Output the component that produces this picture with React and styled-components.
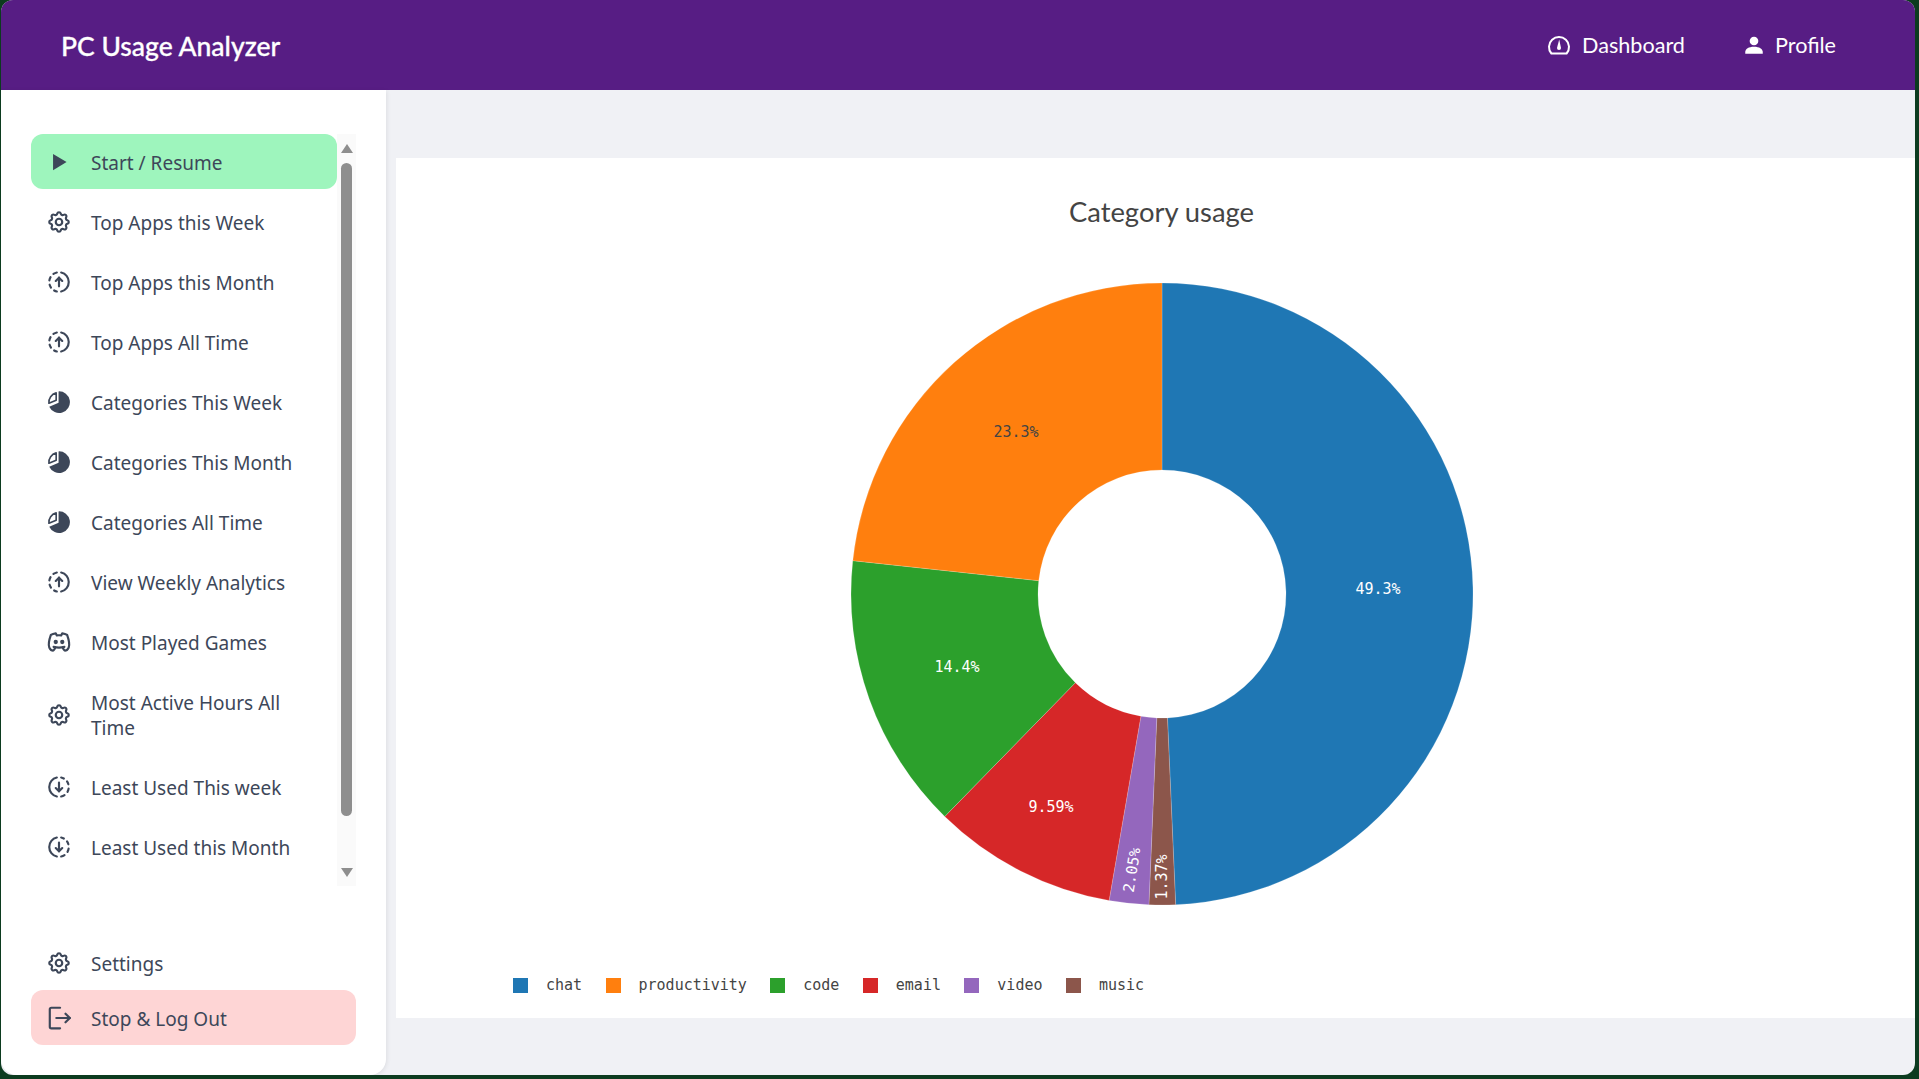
import styled, { createGlobalStyle } from "styled-components";
import { TbSettings, TbBrandDiscord } from "react-icons/tb";

const GlobalStyle = createGlobalStyle`
    html, body {
        margin: 0;
        height: 100%;
        overflow: hidden;
        background: #0c3b1f;
    }
    * {
        box-sizing: border-box;
    }
`;

// tabler style progress circles, drawn here so both directions share one shape
const ProgressUp = () => (
    <svg viewBox="0 0 24 24" width="24" height="24" fill="none" stroke="currentColor" strokeWidth="2" strokeLinecap="round" strokeLinejoin="round">
        <path d="M10 20.777a8.942 8.942 0 0 1 -2.48 -.969" />
        <path d="M14 3.223a9.003 9.003 0 0 1 0 17.554" />
        <path d="M4.579 17.093a8.961 8.961 0 0 1 -1.227 -2.592" />
        <path d="M3.124 10.5c.16 -.95 .468 -1.85 .9 -2.675l.169 -.305" />
        <path d="M6.907 4.579a8.954 8.954 0 0 1 3.093 -1.356" />
        <path d="M12 16v-8" />
        <path d="M9 11l3 -3l3 3" />
    </svg>
);

const ProgressDown = () => (
    <svg viewBox="0 0 24 24" width="24" height="24" fill="none" stroke="currentColor" strokeWidth="2" strokeLinecap="round" strokeLinejoin="round">
        <path d="M14 3.223a8.942 8.942 0 0 1 2.48 .969" />
        <path d="M10 20.777a9.003 9.003 0 0 1 0 -17.554" />
        <path d="M19.421 6.907a8.961 8.961 0 0 1 1.227 2.592" />
        <path d="M20.876 13.5c-.16 .95 -.468 1.85 -.9 2.675l-.169 .305" />
        <path d="M17.093 19.421a8.954 8.954 0 0 1 -3.093 1.356" />
        <path d="M12 8v8" />
        <path d="M9 13l3 3l3 -3" />
    </svg>
);

const PieIcon = () => (
    <svg viewBox="0 0 24 24" width="24" height="24">
        <path fill="currentColor" d="M11.6 2.2A10 10 0 1 1 3 16.4L11.6 12.6Z" />
        <path fill="none" stroke="currentColor" strokeWidth="1.5" strokeLinejoin="round" d="M9.4 3.6A9 9 0 0 0 2.7 13.2L9.4 10.3Z" />
    </svg>
);

const PlayIcon = () => (
    <svg viewBox="0 0 24 24" width="24" height="24">
        <path fill="currentColor" d="M6.5 4.5L19 12L6.5 19.5Z" />
    </svg>
);

const LogoutIcon = () => (
    <svg viewBox="0 0 24 24" width="24" height="24" fill="none" stroke="currentColor" strokeWidth="2" strokeLinecap="round" strokeLinejoin="round">
        <path d="M13 2.5H5a1.5 1.5 0 0 0 -1.5 1.5v16a1.5 1.5 0 0 0 1.5 1.5h8" />
        <path d="M9.5 12H22" />
        <path d="M18 8l4 4l-4 4" />
    </svg>
);

const GaugeIcon = () => (
    <svg viewBox="0 0 24 24" width="24" height="24" fill="none" stroke="currentColor" strokeWidth="2" strokeLinejoin="round">
        <path d="M4.4 20.5a10 10 0 1 1 15.2 0Z" />
        <path fill="currentColor" stroke="none" d="M12.2 6.5L14 15a2 2 0 0 1 -4 0Z" />
    </svg>
);

const UserIcon = () => (
    <svg viewBox="0 0 24 24" width="20" height="20">
        <circle cx="12" cy="7.2" r="5.2" fill="currentColor" />
        <path fill="currentColor" d="M1.5 22.5v-2c0-4 4-6.5 10.5-6.5s10.5 2.5 10.5 6.5v2Z" />
    </svg>
);

const menuItems = [
    { label: "Start / Resume", icon: <PlayIcon />, active: true },
    { label: "Top Apps this Week", icon: <TbSettings /> },
    { label: "Top Apps this Month", icon: <ProgressUp /> },
    { label: "Top Apps All Time", icon: <ProgressUp /> },
    { label: "Categories This Week", icon: <PieIcon /> },
    { label: "Categories This Month", icon: <PieIcon /> },
    { label: "Categories All Time", icon: <PieIcon /> },
    { label: "View Weekly Analytics", icon: <ProgressUp /> },
    { label: "Most Played Games", icon: <TbBrandDiscord /> },
    { label: "Most Active Hours All Time", icon: <TbSettings /> },
    { label: "Least Used This week", icon: <ProgressDown /> },
    { label: "Least Used this Month", icon: <ProgressDown /> },
];

// clockwise from twelve o'clock, same order as the reference chart
const slices = [
    { name: "chat", pct: 49.3, color: "#1f77b4" },
    { name: "music", pct: 1.37, color: "#8c564b" },
    { name: "video", pct: 2.05, color: "#9467bd" },
    { name: "email", pct: 9.59, color: "#d62728" },
    { name: "code", pct: 14.4, color: "#2ca02c" },
    { name: "productivity", pct: 23.29, color: "#ff7f0e" },
];

const legendOrder = ["chat", "productivity", "code", "email", "video", "music"];

const pieLabels = [
    { text: "49.3%", x: 216, y: -5, fill: "#fff" },
    { text: "23.3%", x: -146, y: -162, fill: "#444" },
    { text: "14.4%", x: -205, y: 73, fill: "#fff" },
    { text: "9.59%", x: -111, y: 213, fill: "#fff" },
    { text: "2.05%", x: -30, y: 276, fill: "#fff", rotate: -81 },
    { text: "1.37%", x: 0, y: 283, fill: "#fff", rotate: -90 },
];

const OUTER = 311;
const INNER = 124;

const point = (radius, deg) => {
    const rad = (deg * Math.PI) / 180;
    return `${(radius * Math.sin(rad)).toFixed(2)} ${(-radius * Math.cos(rad)).toFixed(2)}`;
};

const slicePath = (start, end) => {
    const large = end - start > 180 ? 1 : 0;
    return `M${point(OUTER, start)}A${OUTER} ${OUTER} 0 ${large} 1 ${point(OUTER, end)}L${point(INNER, end)}A${INNER} ${INNER} 0 ${large} 0 ${point(INNER, start)}Z`;
};

const Donut = () => {
    let angle = 0;
    const total = slices.reduce((sum, s) => sum + s.pct, 0);
    return (
        <PieSvg viewBox="-320 -320 640 640">
            {slices.map((s) => {
                const start = angle;
                angle += (s.pct / total) * 360;
                return <path key={s.name} d={slicePath(start, angle)} fill={s.color} stroke="#fff" strokeOpacity="0.3" strokeWidth="0.6" />;
            })}
            {pieLabels.map((l) => (
                <PieLabel
                    key={l.text}
                    fill={l.fill}
                    textAnchor="middle"
                    dominantBaseline="central"
                    transform={`translate(${l.x} ${l.y}) rotate(${l.rotate || 0})`}
                >
                    {l.text}
                </PieLabel>
            ))}
        </PieSvg>
    );
};

const App = () => {
    return (
        <Page>
            <GlobalStyle />
            <Window>
                <Header>
                    <Brand>PC Usage Analyzer</Brand>
                    <TopNav>
                        <TopLink>
                            <GaugeIcon />
                            Dashboard
                        </TopLink>
                        <TopLink>
                            <UserIcon />
                            Profile
                        </TopLink>
                    </TopNav>
                </Header>
                <Body>
                    <Sidebar>
                        <ScrollArea>
                            <MenuList>
                                {menuItems.map((item) => (
                                    <MenuItem key={item.label} $bg={item.active ? "#9ef5bd" : "transparent"}>
                                        <MenuIcon>{item.icon}</MenuIcon>
                                        <span>{item.label}</span>
                                    </MenuItem>
                                ))}
                            </MenuList>
                            <ScrollRail>
                                <ArrowUp />
                                <Thumb />
                                <ArrowDown />
                            </ScrollRail>
                        </ScrollArea>
                        <BottomMenu>
                            <MenuItem $bg="transparent">
                                <MenuIcon>
                                    <TbSettings />
                                </MenuIcon>
                                <span>Settings</span>
                            </MenuItem>
                            <MenuItem $bg="#fed5d5">
                                <MenuIcon>
                                    <LogoutIcon />
                                </MenuIcon>
                                <span>Stop &amp; Log Out</span>
                            </MenuItem>
                        </BottomMenu>
                    </Sidebar>
                    <Main>
                        <ChartCard>
                            <ChartTitle>Category usage</ChartTitle>
                            <Donut />
                            <Legend>
                                {legendOrder.map((name) => (
                                    <LegendItem key={name}>
                                        <Swatch $color={slices.find((s) => s.name === name).color} />
                                        {name}
                                    </LegendItem>
                                ))}
                            </Legend>
                        </ChartCard>
                    </Main>
                </Body>
            </Window>
        </Page>
    );
};

const Page = styled.div`
    height: 100vh;
    padding: 0 4px 4px 1px;
    background: #0c3b1f;
`;

const Window = styled.div`
    height: 100%;
    display: flex;
    flex-direction: column;
    overflow: hidden;
    border-radius: 12px;
    background: #f0f1f5;
`;

const Header = styled.header`
    flex: 0 0 90px;
    display: flex;
    align-items: center;
    justify-content: space-between;
    padding: 0 79px 0 60px;
    background: #571d84;
    color: #fff;
`;

const Brand = styled.div`
    padding-top: 2px;
    font-family: "Lato", sans-serif;
    font-size: 26.5px;
    font-weight: 500;
    -webkit-text-stroke: 0.3px #fff;
`;

const TopNav = styled.nav`
    display: flex;
    align-items: center;
    gap: 59px;
    padding-bottom: 1px;
`;

const TopLink = styled.a`
    display: flex;
    align-items: center;
    gap: 11px;
    font-family: "Lato", sans-serif;
    font-size: 21.6px;
    font-weight: 400;
`;

const Body = styled.div`
    flex: 1;
    min-height: 0;
    display: flex;
`;

const Sidebar = styled.aside`
    flex: 0 0 385px;
    display: flex;
    flex-direction: column;
    justify-content: space-between;
    padding: 44px 30px 30px;
    background: #fff;
    border-radius: 0 0 16px 16px;
    box-shadow: 1px 1px 4px rgba(0, 0, 0, 0.08);
    font-family: "Noto Sans", sans-serif;
    color: #3d4759;
`;

const ScrollArea = styled.div`
    display: flex;
    height: 752px;
`;

const MenuList = styled.ul`
    flex: 1;
    min-width: 0;
    margin: 0;
    padding: 0;
    list-style: none;
    display: flex;
    flex-direction: column;
    gap: 5px;
    overflow: hidden;
`;

const MenuItem = styled.li`
    flex: none;
    list-style: none;
    display: flex;
    align-items: center;
    gap: 22px;
    padding: 17px 17px 13px;
    border-radius: 12px;
    font-size: 19px;
    line-height: 25px;
    background: ${(props) => props.$bg};
`;

const MenuIcon = styled.span`
    flex: 0 0 21px;
    width: 21px;
    min-width: 0;
    height: 21px;
    margin-top: -3px;
    display: flex;
    align-items: center;
    justify-content: center;
    svg {
        flex: none;
        width: 26px;
        height: 26px;
    }
`;

const ScrollRail = styled.div`
    flex: 0 0 19px;
    display: flex;
    flex-direction: column;
    align-items: center;
    padding: 10px 0 9px;
    background: #fafafa;
`;

const ArrowUp = styled.div`
    flex: none;
    width: 0;
    height: 0;
    border-left: 6.5px solid transparent;
    border-right: 6.5px solid transparent;
    border-bottom: 9px solid #8e8e8e;
`;

const ArrowDown = styled(ArrowUp)`
    margin-top: auto;
    border-bottom: none;
    border-top: 9px solid #8e8e8e;
`;

const Thumb = styled.div`
    flex: none;
    width: 11px;
    height: 653px;
    margin-top: 10px;
    border-radius: 6px;
    background: #8e8e8e;
`;

const BottomMenu = styled.div`
    display: flex;
    flex-direction: column;
`;

const Main = styled.main`
    flex: 1;
    min-width: 0;
    padding: 68px 0 57px 10px;
`;

const ChartCard = styled.section`
    height: 100%;
    display: flex;
    flex-direction: column;
    align-items: center;
    padding: 38px 0 0 12px;
    background: #fff;
`;

const ChartTitle = styled.h2`
    margin: 0;
    font-family: "Lato", sans-serif;
    font-size: 27.4px;
    line-height: 32px;
    font-weight: 400;
    color: #444;
`;

const PieSvg = styled.svg`
    flex: none;
    width: 640px;
    height: 640px;
    margin-top: 46px;
`;

const PieLabel = styled.text`
    font-family: "DejaVu Sans Mono", monospace;
    font-size: 15px;
`;

const Legend = styled.div`
    align-self: flex-start;
    display: flex;
    gap: 23.4px;
    margin: 64px 0 0 105px;
    font-family: "DejaVu Sans Mono", monospace;
    font-size: 15px;
    line-height: 15px;
    color: #444;
`;

const LegendItem = styled.div`
    display: flex;
    align-items: center;
    gap: 18px;
`;

const Swatch = styled.span`
    width: 15px;
    height: 15px;
    background: ${(props) => props.$color};
`;

export default App;
